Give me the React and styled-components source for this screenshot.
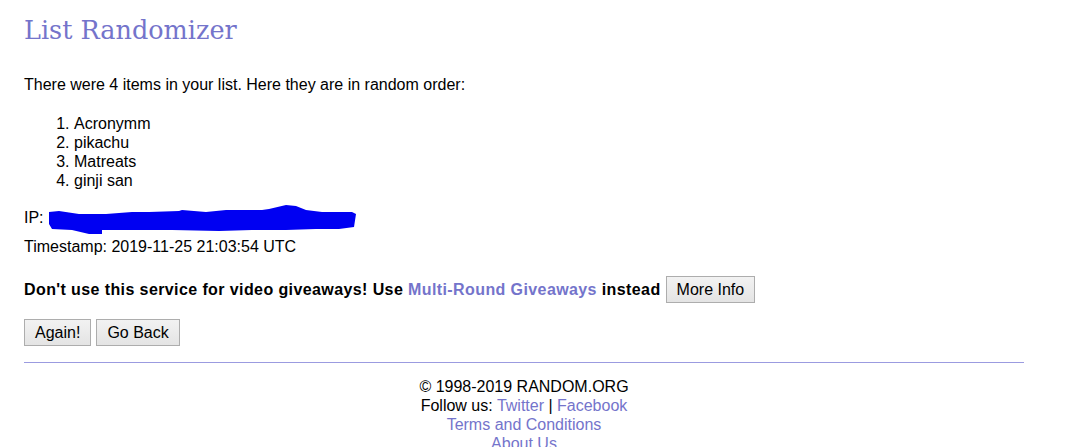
import React from 'react';
import styled, { createGlobalStyle } from 'styled-components';

const GlobalStyle = createGlobalStyle`
  body {
    margin: 0;
    background: #ffffff;
    color: #000000;
    font-family: Tahoma, "Liberation Sans", "DejaVu Sans", sans-serif;
    font-size: 16px;
  }
`;

const Page = styled.div`
  width: 1000px;
  margin: 0 24px;
  padding-top: 11px;
`;

const Title = styled.h1`
  margin: 0;
  padding-top: 2px;
  font-family: Georgia, "DejaVu Serif", "Liberation Serif", serif;
  font-weight: normal;
  font-size: 25.5px;
  line-height: 34px;
  color: #7474cb;
`;

const Text = styled.p`
  margin: ${p => p.$top || 0}px 0 0;
  line-height: ${p => p.$height || 19}px;
  font-weight: ${p => (p.$bold ? 'bold' : 'normal')};
  letter-spacing: ${p => (p.$bold ? '0.4px' : 'normal')};
  display: flex;
  align-items: center;
  gap: 5px;
`;

const List = styled.ol`
  margin: 20px 0 0;
  padding-left: 50px;
  line-height: 19px;
`;

const Link = styled.a`
  color: #7474cb;
  text-decoration: none;
`;

const Button = styled.button`
  font-family: Arial, "Liberation Sans", sans-serif;
  font-size: 16px;
  letter-spacing: normal;
  font-weight: normal;
  height: 27px;
  padding: 0 10px;
  color: #000;
  border: 1px solid #adadad;
  border-radius: 0;
  background: linear-gradient(#f2f2f2, #e4e4e4);
`;

const ButtonRow = styled.div`
  display: flex;
  gap: 5px;
  margin-top: 16px;
`;

const Rule = styled.hr`
  margin: 16px 0 0;
  border: 0;
  border-top: 1px solid #9b9be0;
`;

const Footer = styled.footer`
  text-align: center;
  line-height: 19px;
  margin-top: 14px;
`;

const Scribble = () => (
  <svg width="310" height="32" viewBox="0 0 310 32">
    <path
      d="M0 10 L10 9 L30 12 L57 12 L83 10 L100 10 L130 9 L133 8 L157 10 L177 8 L213 8 L220 7 L237 3 L247 4 L257 8 L273 10 L303 10 L307 12 L305 25 L290 27 L267 27 L237 28 L203 28 L170 29 L123 28 L90 28 L53 28 L53 32 L40 32 L23 28 L3 27 L0 22 Z"
      fill="#0000f2"
    />
  </svg>
);

export default function App() {
  return (
    <>
      <GlobalStyle />
      <Page>
        <Title>List Randomizer</Title>
        <Text $top={28}>There were 4 items in your list. Here they are in random order:</Text>
        <List>
          <li>Acronymm</li>
          <li>pikachu</li>
          <li>Matreats</li>
          <li>ginji san</li>
        </List>
        <Text $top={12} $height={32}>
          IP: <Scribble />
        </Text>
        <Text $top={3}>Timestamp: 2019-11-25 21:03:54 UTC</Text>
        <Text $top={20} $height={27} $bold>
          <span>
            Don't use this service for video giveaways! Use{' '}
            <Link href="#">Multi-Round Giveaways</Link> instead
          </span>
          <Button>More Info</Button>
        </Text>
        <ButtonRow>
          <Button>Again!</Button>
          <Button>Go Back</Button>
        </ButtonRow>
        <Rule />
        <Footer>
          <div>© 1998-2019 RANDOM.ORG</div>
          <div>
            Follow us: <Link href="#">Twitter</Link> | <Link href="#">Facebook</Link>
          </div>
          <div>
            <Link href="#">Terms and Conditions</Link>
          </div>
          <div>
            <Link href="#">About Us</Link>
          </div>
        </Footer>
      </Page>
    </>
  );
}
